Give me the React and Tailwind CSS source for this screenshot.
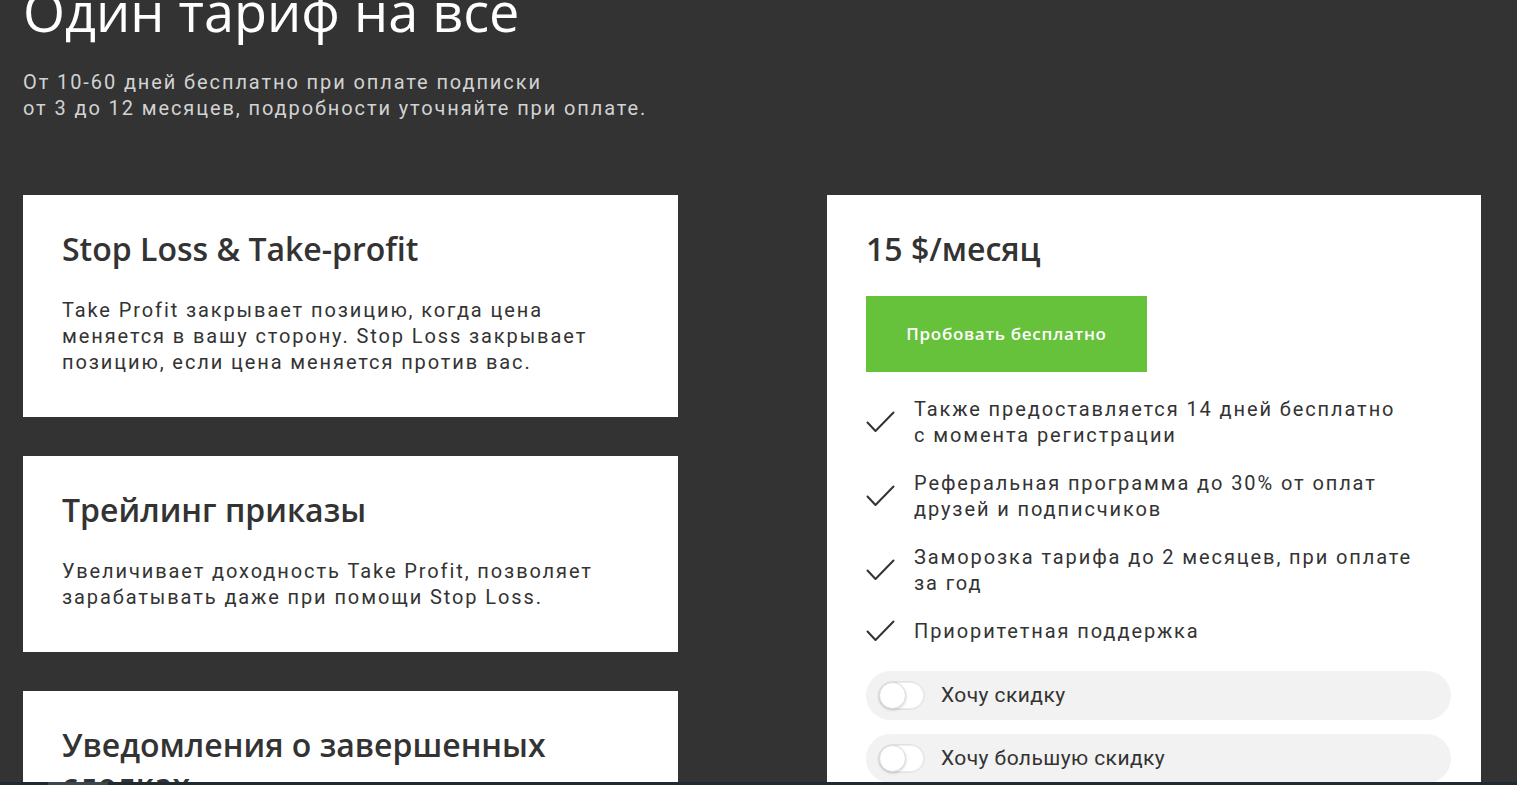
const features = [
  {
    title: 'Stop Loss & Take-profit',
    text: 'Take Profit закрывает позицию, когда цена меняется в вашу сторону. Stop Loss закрывает позицию, если цена меняется против вас.',
  },
  {
    title: 'Трейлинг приказы',
    text: 'Увеличивает доходность Take Profit, позволяет зарабатывать даже при помощи Stop Loss.',
  },
  {
    title: 'Уведомления о завершенных сделках',
    text: 'Получайте уведомления о каждой закрытой сделке в Telegram и на почту.',
  },
];

const perks = [
  ['Также предоставляется 14 дней бесплатно', 'с момента регистрации'],
  ['Реферальная программа до 30% от оплат', 'друзей и подписчиков'],
  ['Заморозка тарифа до 2 месяцев, при оплате', 'за год'],
  ['Приоритетная поддержка'],
];

const heading = { fontFamily: '"Open Sans", "Noto Sans", sans-serif' };
const body = { fontFamily: 'Roboto, "Noto Sans", sans-serif' };

function Check() {
  return (
    <svg width="29" height="22" viewBox="0 0 29 22" fill="none" className="shrink-0">
      <path d="M1.5 11.5 L9.5 20 L27.5 1.5" stroke="#333" strokeWidth="2" strokeLinecap="round" strokeLinejoin="round" />
    </svg>
  );
}

function Toggle({ label }) {
  return (
    <label className="flex items-center gap-4 h-[49px] px-3 rounded-full bg-[#f2f2f2] cursor-pointer">
      <span className="relative w-[47px] h-[29px] rounded-full bg-white border border-[#e2e2e2] shadow-[inset_0_0_0_1px_#ececec]">
        <span className="absolute left-0 top-0 w-[27px] h-[27px] rounded-full bg-white border border-[#dcdcdc] shadow-[0_1px_3px_rgba(0,0,0,0.18)]" />
      </span>
      <span className="text-[21px] tracking-[0.02em] text-[#333]" style={body}>{label}</span>
    </label>
  );
}

export default function App() {
  return (
    <div className="min-h-screen bg-[#333333] overflow-hidden">
      <div className="px-[23px]">
        <h1 className="-mt-[21px] text-[54px] leading-[64px] text-white" style={heading}>
          Один тариф на все
        </h1>
        <p className="mt-[26px] text-[20px] leading-[26px] tracking-[0.095em] text-[#d2d2d2]" style={body}>
          От 10-60 дней бесплатно при оплате подписки
          <br />
          от 3 до 12 месяцев, подробности уточняйте при оплате.
        </p>

        <div className="flex gap-[149px] mt-[74px]">
          <div className="w-[655px] flex flex-col gap-[39px]">
            {features.map((f) => (
              <div key={f.title} className="bg-white pl-[39px] pr-[60px] pt-[34px] pb-[42px]">
                <h3 className="text-[32px] leading-[40px] font-semibold text-[#333]" style={heading}>
                  {f.title}
                </h3>
                <p className="mt-[28px] text-[20px] leading-[26px] tracking-[0.095em] text-[#333]" style={body}>
                  {f.text}
                </p>
              </div>
            ))}
          </div>

          <div className="w-[654px] bg-white pl-[39px] pr-[30px] pt-[34px] pb-10">
            <h3 className="text-[32px] leading-[40px] font-semibold text-[#333]" style={heading}>
              15 $/месяц
            </h3>
            <button
              className="mt-[27px] w-[281px] h-[76px] bg-[#66c13b] text-white text-[17px] font-semibold tracking-[0.04em]"
              style={heading}
            >
              Пробовать бесплатно
            </button>

            <ul className="mt-[24px] flex flex-col gap-[22px]">
              {perks.map((lines) => (
                <li key={lines[0]} className="flex items-center gap-[19px]">
                  <Check />
                  <span className="text-[20px] leading-[26px] tracking-[0.095em] text-[#333]" style={body}>
                    {lines.map((l, i) => (
                      <span key={i} className="block">{l}</span>
                    ))}
                  </span>
                </li>
              ))}
            </ul>

            <div className="mt-[27px] flex flex-col gap-[14px] w-[585px]">
              <Toggle label="Хочу скидку" />
              <Toggle label="Хочу большую скидку" />
            </div>
          </div>
        </div>
      </div>

      <div className="fixed left-0 right-0 bottom-0 h-[3px] bg-[#1e2b30]">
        <div className="ml-[48px] w-[60px] h-full bg-[#3a484d]" />
      </div>
    </div>
  );
}
